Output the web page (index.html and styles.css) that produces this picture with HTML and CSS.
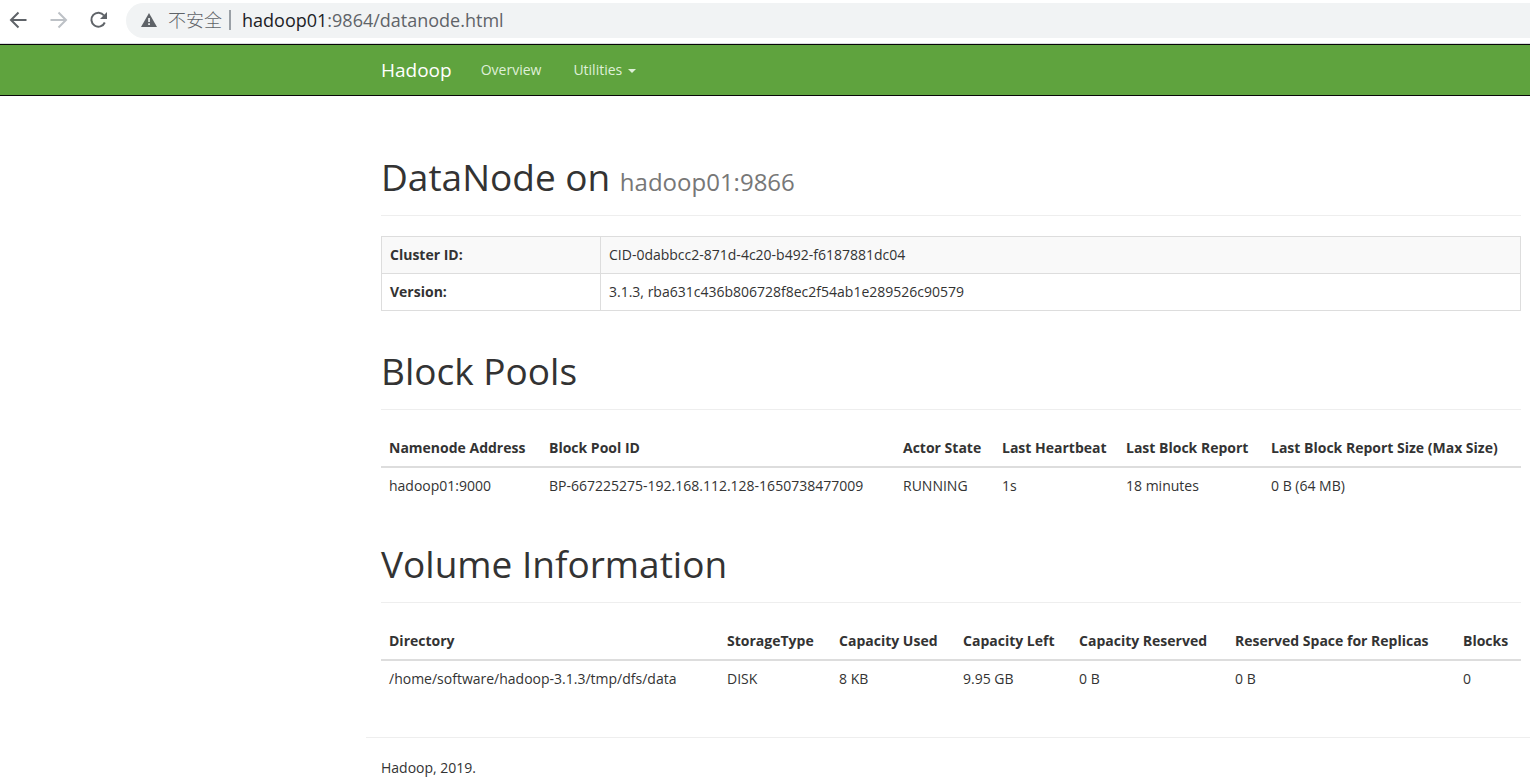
FILE: index.html
```html
<!DOCTYPE html>
<html lang="en">
<head>
<meta charset="utf-8">
<title>DataNode Information</title>
<link rel="stylesheet" href="styles.css">
</head>
<body>
<div class="toolbar">
  <button class="tool" type="button" aria-label="Back">
    <svg width="20" height="20" viewBox="0 0 20 20" fill="none" stroke="#5f6368" stroke-width="2"><path d="M18.500 10H3.500M10.500 2.500L3 10l7.500 7.500"/></svg>
  </button>
  <button class="tool" type="button" aria-label="Forward" disabled>
    <svg width="20" height="20" viewBox="0 0 20 20" fill="none" stroke="#bdc1c6" stroke-width="2"><path d="M2.500 10h15M10.500 2.500L18 10l-7.500 7.500"/></svg>
  </button>
  <button class="tool" type="button" aria-label="Reload">
    <svg width="20" height="20" viewBox="0 0 20 20"><path d="M16.800 12.500A7 7 0 1 1 16 5.500" fill="none" stroke="#5f6368" stroke-width="2"/><path d="M19 2v7h-7z" fill="#5f6368"/></svg>
  </button>
  <div class="address">
    <svg class="warn" width="16" height="14" viewBox="0 0 16 14"><path d="M8 0l8 14H0z" fill="#5f6368"/><path d="M7.200 5h1.700v4H7.200zM7.200 10.300h1.700V12H7.200z" fill="#f1f3f4"/></svg>
    <span class="insecure">不安全</span>
    <span class="divider"></span>
    <span class="url" role="textbox" aria-label="Address">hadoop01<span class="path">:9864/datanode.html</span></span>
  </div>
</div>
<header class="navbar">
  <a class="brand" href="#">Hadoop</a>
  <nav class="links">
    <a class="link" href="#">Overview</a>
    <a class="link" href="#">Utilities <span class="caret"></span></a>
  </nav>
</header>
<main class="container">
  <h1 class="heading first">DataNode on <small class="host">hadoop01:9866</small></h1>
  <table class="table bordered">
    <colgroup><col class="w219"><col></colgroup>
    <tbody>
      <tr><th scope="row">Cluster ID:</th><td>CID-0dabbcc2-871d-4c20-b492-f6187881dc04</td></tr>
      <tr><th scope="row">Version:</th><td>3.1.3, rba631c436b806728f8ec2f54ab1e289526c90579</td></tr>
    </tbody>
  </table>
  <h1 class="heading">Block Pools</h1>
  <table class="table plain">
    <colgroup><col class="w160"><col><col class="w99"><col class="w124"><col class="w145"><col class="w258"></colgroup>
    <thead><tr><th>Namenode Address</th><th>Block Pool ID</th><th>Actor State</th><th>Last Heartbeat</th><th>Last Block Report</th><th>Last Block Report Size (Max Size)</th></tr></thead>
    <tbody><tr><td>hadoop01:9000</td><td>BP-667225275-192.168.112.128-1650738477009</td><td>RUNNING</td><td>1s</td><td>18 minutes</td><td>0 B (64 MB)</td></tr></tbody>
  </table>
  <h1 class="heading">Volume Information</h1>
  <table class="table plain">
    <colgroup><col><col class="w112"><col class="w124"><col class="w116"><col class="w156"><col class="w228"><col class="w66"></colgroup>
    <thead><tr><th>Directory</th><th>StorageType</th><th>Capacity Used</th><th>Capacity Left</th><th>Capacity Reserved</th><th>Reserved Space for Replicas</th><th>Blocks</th></tr></thead>
    <tbody><tr><td>/home/software/hadoop-3.1.3/tmp/dfs/data</td><td>DISK</td><td>8 KB</td><td>9.95 GB</td><td>0 B</td><td>0 B</td><td>0</td></tr></tbody>
  </table>
</main>
<footer class="footer">Hadoop, 2019.</footer>
</body>
</html>
```
FILE: styles.css
```css
* { box-sizing: border-box; }
body {
  margin: 0;
  background: #fff;
  color: #333;
  font: 14px/20px "Open Sans", "Noto Sans CJK SC", sans-serif;
}
.toolbar {
  display: flex;
  align-items: center;
  gap: 20px;
  height: 44px;
  padding: 0 0 3px 8px;
  border-bottom: 1px solid #dadce0;
}
.tool {
  display: flex;
  padding: 0;
  border: 0;
  background: none;
}
.address {
  display: flex;
  flex: 1;
  align-items: center;
  height: 35px;
  margin-left: -2px;
  padding-left: 15px;
  border-radius: 18px 0 0 18px;
  background: #f1f3f4;
  white-space: nowrap;
}
.insecure {
  margin-left: 11px;
  color: #5f6368;
  font-size: 18px;
  font-weight: 300;
}
.divider {
  width: 2px;
  height: 20px;
  margin: 0 11px 0 7px;
  background: #9aa0a6;
}
.url { color: #202124; font-size: 18px; }
.path { color: #5f6368; }
.navbar {
  display: flex;
  align-items: center;
  height: 52px;
  padding-left: 381px;
  border: solid #080808;
  border-width: 1px 0;
  background: #5fa33e;
}
.brand { color: #fff; font-size: 19px; text-decoration: none; }
.links { display: flex; gap: 32px; margin-left: 29px; }
.link { color: #dff0d8; text-decoration: none; }
.caret {
  display: inline-block;
  margin-left: 2px;
  border: 4px solid transparent;
  border-top-color: #dff0d8;
  border-bottom: 0;
  vertical-align: middle;
}
.container { padding: 61px 9px 0 381px; }
.heading {
  margin: 40px 0 20px;
  padding-bottom: 18px;
  border-bottom: 1px solid #eee;
  font-size: 37px;
  font-weight: 400;
  line-height: 40px;
}
.first { margin-top: 0; }
.host { color: #777; font-size: 24px; line-height: 24px; }
.table {
  width: 100%;
  table-layout: fixed;
  border-collapse: collapse;
  white-space: nowrap;
}
.table th, .table td { padding: 8px; text-align: left; }
.table th { font-weight: 700; }
.bordered th, .bordered td { border: 1px solid #ddd; }
.bordered tr:first-child { background: #f9f9f9; }
.plain th { border-bottom: 2px solid #ddd; }
.w66 { width: 66px; }
.w99 { width: 99px; }
.w112 { width: 112px; }
.w116 { width: 116px; }
.w124 { width: 124px; }
.w145 { width: 145px; }
.w156 { width: 156px; }
.w160 { width: 160px; }
.w219 { width: 219px; }
.w228 { width: 228px; }
.w258 { width: 258px; }
.footer {
  margin: 40px 0 0 366px;
  padding: 20px 15px 0;
  border-top: 1px solid #eee;
}
```
